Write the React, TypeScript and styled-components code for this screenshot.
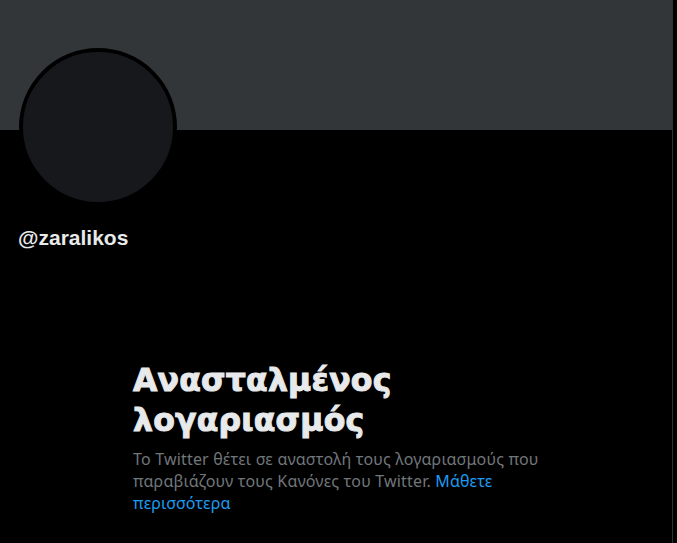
import React from 'react';
import styled, { createGlobalStyle } from 'styled-components';

const GlobalStyle = createGlobalStyle`
  html, body {
    margin: 0;
    padding: 0;
    background: #000;
  }
  body {
    font-family: "Noto Sans", "Open Sans", sans-serif;
  }
`;

const Page = styled.div`
  width: 677px;
  height: 543px;
  overflow: hidden;
  background: #000;
`;

const Column = styled.main`
  width: 672px;
  height: 100%;
  border-right: 1px solid #2f3336;
`;

const Banner = styled.div`
  height: 130px;
  background-color: #333639;
`;

const ProfileHeader = styled.div`
  padding: 0 18px;
`;

const Avatar = styled.div`
  width: 150px;
  height: 150px;
  margin-top: -82px;
  margin-left: 1px;
  border: 4px solid #000;
  border-radius: 50%;
  background-color: #16181c;
`;

const Handle = styled.div`
  margin-top: 20px;
  color: #e7e9ea;
  font-family: "Liberation Sans", Arial, sans-serif;
  font-size: 21px;
  font-weight: 700;
  line-height: 24px;
`;

const Notice = styled.section`
  width: 406px;
  margin: 110px auto 0;
`;

const NoticeTitle = styled.h2`
  margin: 0 0 8px;
  color: #e7e9ea;
  font-family: "DejaVu Sans", Verdana, sans-serif;
  font-size: 31.5px;
  font-weight: 700;
  letter-spacing: 0.2px;
  line-height: 40px;
  -webkit-text-stroke: 1px #e7e9ea;
`;

const NoticeText = styled.p`
  margin: 0;
  color: #71767b;
  font-size: 16px;
  letter-spacing: 0.18px;
  line-height: 22px;
`;

const LearnMore = styled.a`
  color: #1d9bf0;
  text-decoration: none;
`;

export default function App() {
  return (
    <Page>
      <GlobalStyle />
      <Column>
        <Banner />
        <ProfileHeader>
          <Avatar />
          <Handle>@zaralikos</Handle>
        </ProfileHeader>
        <Notice>
          <NoticeTitle>Ανασταλμένος λογαριασμός</NoticeTitle>
          <NoticeText>
            Το Twitter θέτει σε αναστολή τους λογαριασμούς που παραβιάζουν τους Κανόνες του Twitter.{' '}
            <LearnMore href="#">Μάθετε περισσότερα</LearnMore>
          </NoticeText>
        </Notice>
      </Column>
    </Page>
  );
}
